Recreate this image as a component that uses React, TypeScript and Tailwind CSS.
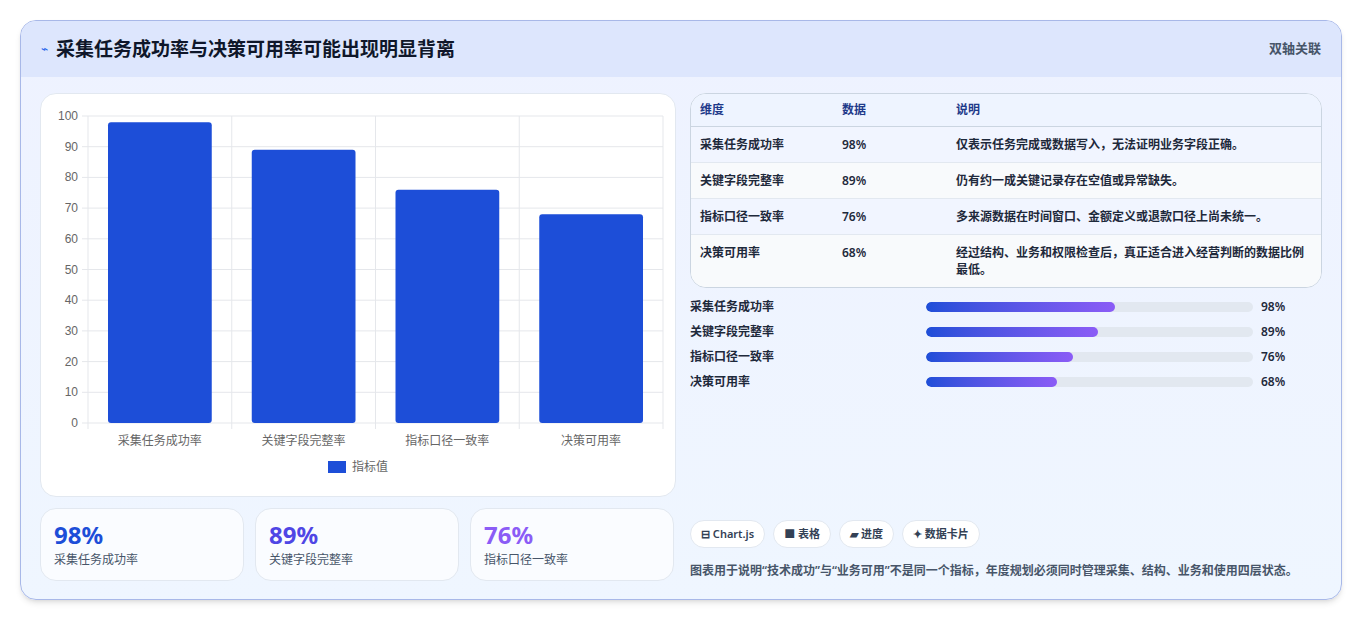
import React from "react";

const F = { fontFamily: '"Noto Sans","Noto Sans CJK SC",sans-serif' };
const data = [
  { n: "采集任务成功率", v: 98, d: "仅表示任务完成或数据写入，无法证明业务字段正确。" },
  { n: "关键字段完整率", v: 89, d: "仍有约一成关键记录存在空值或异常缺失。" },
  { n: "指标口径一致率", v: 76, d: "多来源数据在时间窗口、金额定义或退款口径上尚未统一。" },
  { n: "决策可用率", v: 68, d: "经过结构、业务和权限检查后，真正适合进入经营判断的数据比例最低。" },
];

function Chart() {
  const x0 = 47, x1 = 622, y0 = 22, y1 = 329;
  const h = (y1 - y0) / 100;
  const cw = (x1 - x0) / 4;
  return (
    <svg width="635" height="403" className="block" style={{ fontFamily: '"Liberation Sans","Noto Sans CJK SC",sans-serif' }}>
      {Array.from({ length: 11 }).map((_, i) => {
        const y = y1 - i * 10 * h;
        return (
          <g key={i}>
            <line x1={x0 - 6} x2={x1} y1={y} y2={y} stroke="#e5e7eb" />
            <text x={x0 - 10} y={y + 4} textAnchor="end" fontSize="12" fill="#666">{i * 10}</text>
          </g>
        );
      })}
      {[0, 1, 2, 3, 4].map(i => (
        <line key={i} x1={x0 + i * cw} x2={x0 + i * cw} y1={y0} y2={y1 + 6} stroke="#e5e7eb" />
      ))}
      {data.map((d, i) => (
        <g key={i}>
          <rect x={x0 + i * cw + 20} y={y1 - d.v * h} width={cw - 40} height={d.v * h} rx="3" fill="#1d4ed8" />
          <text x={x0 + i * cw + cw / 2} y={y1 + 22} textAnchor="middle" fontSize="12" fill="#666">{d.n}</text>
        </g>
      ))}
      <rect x="287" y="367" width="18" height="12" fill="#1d4ed8" />
      <text x="311" y="377" fontSize="12" fill="#666">指标值</text>
    </svg>
  );
}

export default function App() {
  return (
    <div className="w-[1363px] h-[621px] bg-white pt-[20px] px-[20px]" style={F}>
      <div className="w-[1322px] h-[580px] rounded-2xl border border-[#a8b8e8] bg-gradient-to-b from-[#eef2ff] to-[#eff6ff] overflow-hidden shadow-md">
        <div className="h-[56px] bg-[#dde6fd] flex items-center justify-between px-[20px]">
          <div className="flex items-center gap-2">
            <span className="text-[#2563eb] text-[12px]">⌁</span>
            <span className="text-[19px] font-bold text-[#0f172a]">采集任务成功率与决策可用率可能出现明显背离</span>
          </div>
          <span className="text-[13px] text-[#475569] font-semibold">双轴关联</span>
        </div>
        <div className="flex gap-[14px] px-[19px] pt-[16px]">
          <div className="w-[636px]">
            <div className="h-[404px] bg-white rounded-2xl border border-[#e2e8f0]"><Chart /></div>
            <div className="flex gap-[11px] mt-[11px]">
              {data.slice(0, 3).map((d, i) => (
                <div key={i} className="w-[204px] h-[73px] bg-white/70 rounded-2xl border border-[#e2e8f0] px-[13px] pt-[10px]">
                  <div className={`text-[24px] font-bold leading-[32px] ${["text-[#1d4ed8]", "text-[#4f46e5]", "text-[#8b5cf6]"][i]}`}>{d.v}%</div>
                  <div className="text-[12px] text-[#475569]">{d.n}</div>
                </div>
              ))}
            </div>
          </div>
          <div className="w-[634px] flex flex-col">
            <div className="rounded-2xl border border-[#cbd5e1] overflow-hidden bg-white text-[12px]">
              <div className="flex h-[33px] items-center bg-[#eef4ff] border-b border-[#cbd5e1] text-[#1e3a8a] font-semibold">
                <div className="w-[151px] pl-[9px]">维度</div><div className="w-[114px]">数据</div><div>说明</div>
              </div>
              {data.map((d, i) => (
                <div key={i} className={`flex py-[9px] ${i < 3 ? "border-b border-[#e2e8f0]" : ""} ${i % 2 === 0 ? "bg-[#f1f5ff]" : "bg-[#f8fafc]"} text-[#1e293b] font-semibold leading-[17px]`}>
                  <div className="w-[151px] pl-[9px] shrink-0">{d.n}</div>
                  <div className="w-[114px] shrink-0">{d.v}%</div>
                  <div className="pr-[6px]">{d.d}</div>
                </div>
              ))}
            </div>
            <div className="mt-[10px] flex flex-col gap-[7px]">
              {data.map((d, i) => (
                <div key={i} className="flex items-center h-[18px] text-[12px] font-semibold text-[#1e293b]">
                  <div className="w-[236px]">{d.n}</div>
                  <div className="w-[327px] h-[10px] rounded-full bg-[#e2e8f0] overflow-hidden">
                    <div className="h-full rounded-full bg-gradient-to-r from-[#1d4ed8] to-[#8b5cf6]" style={{ width: `${d.v * 0.59}%` }} />
                  </div>
                  <div className="ml-[8px]">{d.v}%</div>
                </div>
              ))}
            </div>
            <div className="mt-auto">
              <div className="flex gap-[8px]">
                {["⊟ Chart.js", "■ 表格", "▰ 进度", "✦ 数据卡片"].map(t => (
                  <span key={t} className="h-[28px] px-[10px] flex items-center rounded-full bg-white border border-[#e2e8f0] text-[11px] font-semibold text-[#334155]">{t}</span>
                ))}
              </div>
              <p className="mt-[13px] text-[12px] leading-[20px] text-[#475569] font-semibold">图表用于说明“技术成功”与“业务可用”不是同一个指标，年度规划必须同时管理采集、结构、业务和使用四层状态。</p>
            </div>
          </div>
        </div>
      </div>
    </div>
  );
}
